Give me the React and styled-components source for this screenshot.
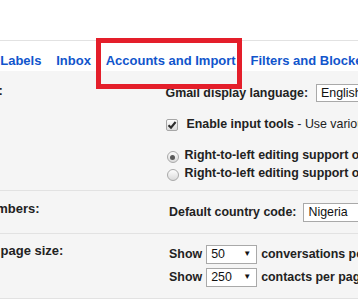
import React from 'react';
import styled, {createGlobalStyle} from 'styled-components';

const GlobalStyle = createGlobalStyle`
    html, body {
        margin: 0;
        padding: 0;
        background: #fff;
        overflow: hidden;
    }
    body {
        font-family: "Liberation Sans", Arial, sans-serif;
        color: #222;
    }
`

const Frame = styled.div`
    position: relative;
    width: 358px;
    height: 301px;
    overflow: hidden;
    background: #fff;
`

const Page = styled.div`
    margin-left: -63px;
    width: 760px;
`

const TopSpace = styled.div`
    height: 40px;
    border-bottom: 1px solid #e2e2e2;
    background: #fff;
`

const TabBar = styled.div`
    display: flex;
    gap: 14.8px;
    height: 30px;
    box-sizing: border-box;
    padding-top: 12px;
    background: #fff;
    white-space: nowrap;
`

const Tab = styled.span`
    font-size: 13px;
    line-height: 15px;
    font-weight: bold;
    color: #15c;
`

const Section = styled.div`
    display: grid;
    grid-template-columns: 228.5px auto;
    background: #f5f5f5;
    border-bottom: 1px solid #e2e2e2;
    white-space: nowrap;
`

const Label = styled.div`
    padding-top: ${p => p.$top}px;
    font-size: 13px;
    line-height: 15px;
    font-weight: bold;
`

const Content = styled.div`
    padding: ${p => p.$pad};
    font-size: 12.4px;
    font-weight: bold;
    line-height: 15px;
`

const Row = styled.div`
    display: flex;
    align-items: center;
    gap: ${p => p.$gap ?? 4}px;
    height: ${p => p.$h}px;
    margin-top: ${p => p.$mt || 0}px;
`

const Select = styled.div`
    display: inline-flex;
    align-items: center;
    justify-content: space-between;
    box-sizing: border-box;
    width: ${p => p.$w}px;
    height: ${p => p.$h || 19}px;
    padding: 0 5px 1px 4px;
    border: 1px solid #a9a9a9;
    background: #fff;
    font-weight: normal;
    font-size: 12.4px;
    line-height: 14px;
    color: #111;
    flex: none;
`

const Arrow = styled.span`
    font-size: 8px;
    line-height: 8px;
    color: #111;
`

const Muted = styled.span`
    font-weight: normal;
`

const CheckBox = styled.span`
    display: inline-flex;
    align-items: center;
    justify-content: center;
    width: 12px;
    height: 12px;
    box-sizing: border-box;
    border: 1px solid #a6a6a6;
    border-radius: 2px;
    background: linear-gradient(#fdfdfd, #dcdcdc);
    margin-right: 9px;
    flex: none;
`

const Radio = styled.span`
    display: inline-flex;
    align-items: center;
    justify-content: center;
    width: 12px;
    height: 12px;
    box-sizing: border-box;
    margin: 4px 6px 0 1px;
    border: 1px solid #a9a9a9;
    border-radius: 50%;
    background: linear-gradient(#fdfdfd, #dadada);
    flex: none;
    &::after {
        content: "";
        display: ${p => (p.$on ? 'block' : 'none')};
        width: 5px;
        height: 5px;
        border-radius: 50%;
        background: #5a5a5a;
    }
`

const Highlight = styled.div`
    position: absolute;
    left: 96px;
    top: 38px;
    width: 146px;
    height: 51px;
    box-sizing: border-box;
    border: 5px solid #e41e2a;
    pointer-events: none;
`

const tabs = ['General', 'Labels', 'Inbox', 'Accounts and Import', 'Filters and Blocked Addresses', 'Forwarding and POP/IMAP'];

const App = () => {
    return (
        <Frame>
            <GlobalStyle />
            <Page>
                <TopSpace />
                <TabBar>
                    {tabs.map(t => <Tab key={t}>{t}</Tab>)}
                </TabBar>

                <Section>
                    <Label $top={12}>Language:</Label>
                    <Content $pad="13px 0 8px 0">
                        <Row $h={18} $gap={8}>
                            <span>Gmail display language:</span>
                            <Select $w={120} $h={18}>English (US)</Select>
                        </Row>
                        <Row $h={15} $mt={15} $gap={0}>
                            <CheckBox>
                                <svg width="10" height="10" viewBox="0 0 10 10">
                                    <path d="M1.5 5.2 L4 7.6 L8.6 2" fill="none" stroke="#2e2e2e" strokeWidth="2.1" />
                                </svg>
                            </CheckBox>
                            <span>Enable input tools <Muted>- Use various text input tools to type in the language of your choice</Muted></span>
                        </Row>
                        <Row $h={18} $mt={14} $gap={0}>
                            <Radio $on />
                            <span>Right-to-left editing support off</span>
                        </Row>
                        <Row $h={18} $gap={0}>
                            <Radio />
                            <span>Right-to-left editing support on</span>
                        </Row>
                    </Content>
                </Section>

                <Section>
                    <Label $top={10}>Phone numbers:</Label>
                    <Content $pad="12px 0 11px 3.6px">
                        <Row $h={19} $gap={7}>
                            <span>Default country code:</span>
                            <Select $w={120}>Nigeria</Select>
                        </Row>
                    </Content>
                </Section>

                <Section>
                    <Label $top={9}>Maximum page size:</Label>
                    <Content $pad="11px 0 11px 3.6px">
                        <Row $h={19}>
                            <span>Show</span>
                            <Select $w={51}>50<Arrow>▼</Arrow></Select>
                            <span>conversations per page</span>
                        </Row>
                        <Row $h={19} $mt={4}>
                            <span>Show</span>
                            <Select $w={51}>250<Arrow>▼</Arrow></Select>
                            <span>contacts per page</span>
                        </Row>
                    </Content>
                </Section>
            </Page>
            <Highlight />
        </Frame>
    );
};

export default App;
